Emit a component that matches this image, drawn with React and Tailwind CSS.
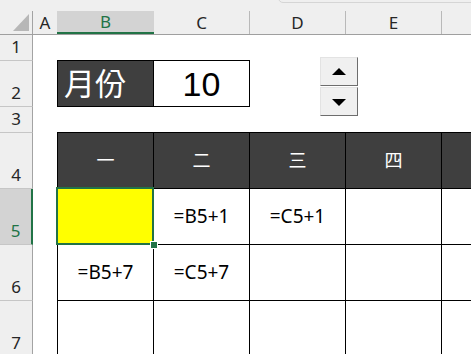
const font = { fontFamily: '"Noto Sans", "Noto Sans CJK JP", sans-serif' };

const rows = [
  { n: 1, h: "h-[26px]" },
  { n: 2, h: "h-[46px]" },
  { n: 3, h: "h-[26px]" },
  { n: 4, h: "h-[56px]" },
  { n: 5, h: "h-[56px]", active: true },
  { n: 6, h: "h-[56px]" },
  { n: 7, h: "h-[56px]" },
];

const tableRows = [
  { dark: true, cells: ["一", "二", "三", "四", ""] },
  { cells: ["", "=B5+1", "=C5+1", "", ""], selected: true },
  { cells: ["=B5+7", "=C5+7", "", "", ""] },
  { cells: ["", "", "", "", ""] },
];

function ColumnHeader() {
  return (
    <div className="relative h-[35px] bg-[#efefef] border-b border-[#9f9f9f] flex items-end text-[17px] text-[#262626]">
      {/* formula bar edge */}
      <div className="absolute left-[278px] -top-[5px] -right-[4px] h-[8px] border border-[#d5d5d5] rounded-bl-[5px]" />
      <div className="w-[33px] h-[23px] border-r border-[#a3a3a3] flex items-end justify-end pr-[3px] pb-[3px]">
        <svg width="16" height="17" viewBox="0 0 16 17">
          <polygon points="16,0 16,17 0,17" fill="#b7b7b7" />
        </svg>
      </div>
      <div className="w-[24px] h-[23px] flex items-center justify-center">A</div>
      <div className="w-[97px] h-[23px] bg-[#d3d3d3] border-b-2 border-[#217346] flex items-center justify-center text-[#217346]">B</div>
      <div className="w-[96px] h-[23px] border-r border-[#b9b9b9] flex items-center justify-center">C</div>
      <div className="w-[96px] h-[23px] border-r border-[#b9b9b9] flex items-center justify-center">D</div>
      <div className="w-[96px] h-[23px] border-r border-[#b9b9b9] flex items-center justify-center">E</div>
      <div className="flex-1 h-[23px]" />
    </div>
  );
}

function RowHeaders() {
  return (
    <div className="w-[33px] shrink-0 flex flex-col bg-[#efefef] text-[17px] text-[#262626]">
      {rows.map((r) => (
        <div
          key={r.n}
          className={`${r.h} shrink-0 flex items-end justify-center pb-[1px] border-b border-[#c6c6c6] ${
            r.active
              ? "bg-[#d3d3d3] text-[#217346] border-r-2 border-r-[#217346]"
              : "border-r border-r-[#a3a3a3]"
          }`}
        >
          {r.n}
        </div>
      ))}
    </div>
  );
}

function Spinner() {
  return (
    <div className="absolute left-[320px] top-[57px] w-[38px] flex flex-col gap-[1px]">
      {["up", "down"].map((d) => (
        <div
          key={d}
          className="h-[29px] bg-[#f0f0f0] border border-t-[#e3e3e3] border-l-[#e3e3e3] border-r-[#6d6d6d] border-b-[#6d6d6d] flex items-center justify-center"
        >
          <svg width="14" height="8" viewBox="0 0 14 8">
            {d === "up" ? (
              <polygon points="7,0 14,7 0,7" fill="#000" />
            ) : (
              <polygon points="0,1 14,1 7,8" fill="#000" />
            )}
          </svg>
        </div>
      ))}
    </div>
  );
}

function Sheet() {
  return (
    <div className="relative flex-1 flex flex-col bg-white">
      <div className="h-[25px] shrink-0" />
      {/* month box */}
      <div className="h-[47px] shrink-0 flex pl-[24px]">
        <div className="w-[97px] h-full bg-[#3f3f3f] border border-black flex items-center pl-[6px] text-white text-[31px] leading-none">
          月份
        </div>
        <div
          className="w-[96px] h-full border-y border-r border-black flex items-center justify-center text-[34px] text-black leading-none"
          style={{ fontFamily: '"Liberation Sans", Arial, sans-serif' }}
        >
          10
        </div>
      </div>
      <div className="h-[25px] shrink-0" />
      {/* calendar table */}
      <div className="ml-[24px] border-t border-l border-black flex flex-col">
        {tableRows.map((row, i) => (
          <div key={i} className={`h-[56px] shrink-0 flex ${row.dark ? "bg-[#3f3f3f]" : ""}`}>
            {row.cells.map((c, j) => (
              <div
                key={j}
                className={`relative ${j === 4 ? "flex-1" : "w-[96px] border-r"} border-b border-black flex items-center justify-center ${
                  row.dark ? "text-white text-[18px]" : "text-black text-[19px]"
                } ${row.selected && j === 0 ? "bg-[#ffff00]" : ""}`}
              >
                {c}
                {row.selected && j === 0 && (
                  <>
                    <div className="absolute -left-[2px] -top-[2px] -right-[1px] -bottom-[1px] border-2 border-[#217346]" />
                    <div className="absolute -right-[4px] -bottom-[4px] w-[6px] h-[6px] bg-[#217346] outline outline-1 outline-white z-10" />
                  </>
                )}
              </div>
            ))}
          </div>
        ))}
      </div>
    </div>
  );
}

export default function App() {
  return (
    <div className="relative w-[471px] h-[354px] overflow-hidden bg-white" style={font}>
      <ColumnHeader />
      <div className="flex">
        <RowHeaders />
        <Sheet />
      </div>
      <Spinner />
    </div>
  );
}
